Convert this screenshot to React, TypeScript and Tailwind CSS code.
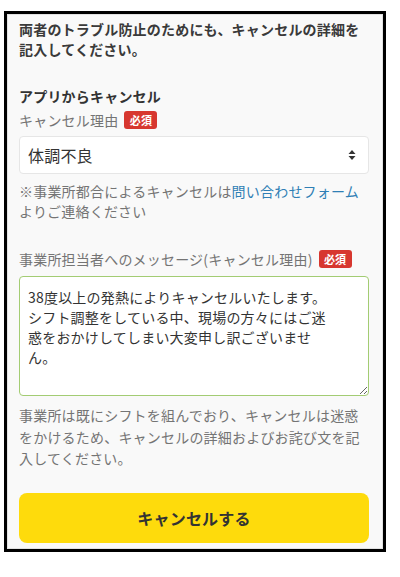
import { useState } from "react";

const font = { fontFamily: '"Noto Sans CJK JP", "Noto Sans", sans-serif' };

function Required() {
  return (
    <span className="ml-[6px] inline-flex h-[18px] w-[33px] items-center justify-center rounded-[3px] bg-[#d7372f] text-[11px] font-bold leading-none text-white">
      必須
    </span>
  );
}

export default function App() {
  const [reason, setReason] = useState("体調不良");
  const [message, setMessage] = useState(
    "38度以上の発熱によりキャンセルいたします。\nシフト調整をしている中、現場の方々にはご迷\n惑をおかけしてしまい大変申し訳ございませ\nん。"
  );

  return (
    <div className="h-[577px] w-[400px] bg-white pl-[4px] pt-[11px]" style={font}>
      <div className="w-[382px] border-[3px] border-black">
        <div className="border border-[#e2e2e2] bg-[#f9f9f9] pb-[5px] pl-[11px] pr-[13px] pt-[4px] tracking-[0.2px]">
          <p className="text-[14px] font-bold leading-[20px] text-[#3a3a3a]">
            両者のトラブル防止のためにも、キャンセルの詳細を記入してください。
          </p>

          <h2 className="mt-[27px] text-[14px] font-bold leading-[20px] text-[#333]">アプリからキャンセル</h2>
          <div className="mt-[4px] flex items-center text-[14px] leading-[20px] text-[#747474]">
            キャンセル理由
            <Required />
          </div>

          <div className="relative mt-[6px]">
            <select
              value={reason}
              onChange={(e) => setReason(e.target.value)}
              className="h-[38px] w-full appearance-none rounded-[4px] border border-[#e6e6e6] bg-white pl-[8px] text-[16px] text-[#333] outline-none"
              style={font}
            >
              <option>体調不良</option>
              <option>家庭の事情</option>
              <option>その他</option>
            </select>
            <svg
              className="pointer-events-none absolute right-[13px] top-1/2 -translate-y-1/2"
              width="8"
              height="12"
              viewBox="0 0 8 12"
            >
              <path d="M4 1 L7.5 5 H0.5 Z M4 11 L7.5 7 H0.5 Z" fill="#333" />
            </svg>
          </div>

          <p className="mt-[7px] text-[14px] leading-[20px] text-[#747474]">
            ※事業所都合によるキャンセルは
            <a href="#" className="text-[#2f7fb5]">
              問い合わせフォーム
            </a>
            よりご連絡ください
          </p>

          <div className="mt-[28px] flex items-center text-[14px] leading-[20px] text-[#747474]">
            事業所担当者へのメッセージ(キャンセル理由)
            <Required />
          </div>

          <textarea
            value={message}
            onChange={(e) => setMessage(e.target.value)}
            className="mt-[7px] block h-[120px] w-full rounded-[4px] border-[1.5px] border-[#a3cc73] bg-white px-[8px] pt-[10px] text-[14px] leading-[20px] text-[#333] outline-none"
            style={font}
          />

          <p className="mt-[9px] text-[14px] leading-[21.5px] text-[#747474]">
            事業所は既にシフトを組んでおり、キャンセルは迷惑をかけるため、キャンセルの詳細およびお詫び文を記入してください。
          </p>

          <button className="mt-[23px] flex h-[50px] w-full items-center justify-center rounded-[8px] bg-[#fedb0c] text-[16px] font-bold text-[#333]">
            キャンセルする
          </button>
        </div>
      </div>
    </div>
  );
}
